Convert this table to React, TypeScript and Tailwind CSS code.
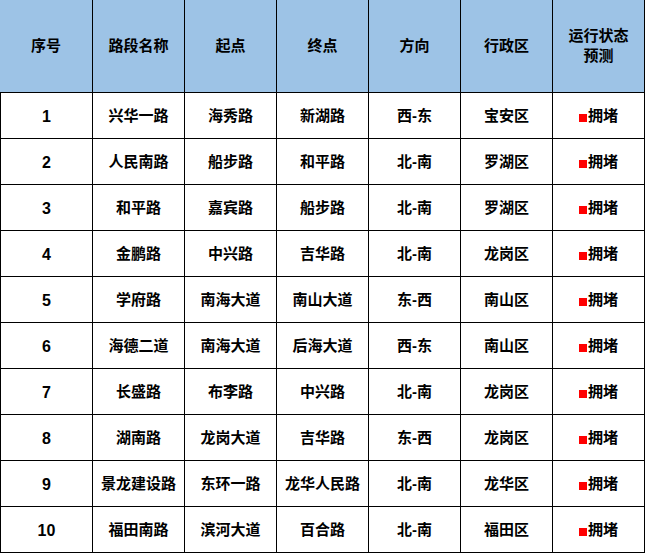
import React from "react";

const rows = [
  ["1", "兴华一路", "海秀路", "新湖路", "西-东", "宝安区"],
  ["2", "人民南路", "船步路", "和平路", "北-南", "罗湖区"],
  ["3", "和平路", "嘉宾路", "船步路", "北-南", "罗湖区"],
  ["4", "金鹏路", "中兴路", "吉华路", "北-南", "龙岗区"],
  ["5", "学府路", "南海大道", "南山大道", "东-西", "南山区"],
  ["6", "海德二道", "南海大道", "后海大道", "西-东", "南山区"],
  ["7", "长盛路", "布李路", "中兴路", "北-南", "龙岗区"],
  ["8", "湖南路", "龙岗大道", "吉华路", "东-西", "龙岗区"],
  ["9", "景龙建设路", "东环一路", "龙华人民路", "北-南", "龙华区"],
  ["10", "福田南路", "滨河大道", "百合路", "北-南", "福田区"],
];

const headers = ["序号", "路段名称", "起点", "终点", "方向", "行政区"];

export default function App() {
  return (
    <div
      className="w-[645px] h-[553px] bg-white text-black font-bold text-[15px]"
      style={{ fontFamily: '"Liberation Sans", "Noto Sans CJK SC", sans-serif' }}
    >
      <div className="flex h-[93px] bg-[#9dc3e6]">
        {headers.map((h, i) => (
          <div
            key={h}
            className={`${i === 0 ? "w-[93px]" : "w-[92px]"} h-full border-r border-b border-black flex items-center justify-center`}
          >
            {h}
          </div>
        ))}
        <div className="w-[92px] h-full border-r border-b border-black flex flex-col items-center justify-center leading-[20px]">
          <span>运行状态</span>
          <span>预测</span>
        </div>
      </div>
      {rows.map((r) => (
        <div key={r[0]} className="flex h-[46px]">
          {r.map((c, i) => (
            <div
              key={i}
              className={`${i === 0 ? "w-[93px] border-l text-[16px]" : "w-[92px]"} h-full border-r border-b border-black flex items-center justify-center pt-[2px]`}
            >
              {c}
            </div>
          ))}
          <div className="w-[92px] h-full border-r border-b border-black flex items-center justify-center pt-[2px]">
            <span className="inline-block w-[8px] h-[8px] bg-[#ff0000] mr-[1px] mt-[2px]" />
            <span>拥堵</span>
          </div>
        </div>
      ))}
    </div>
  );
}
